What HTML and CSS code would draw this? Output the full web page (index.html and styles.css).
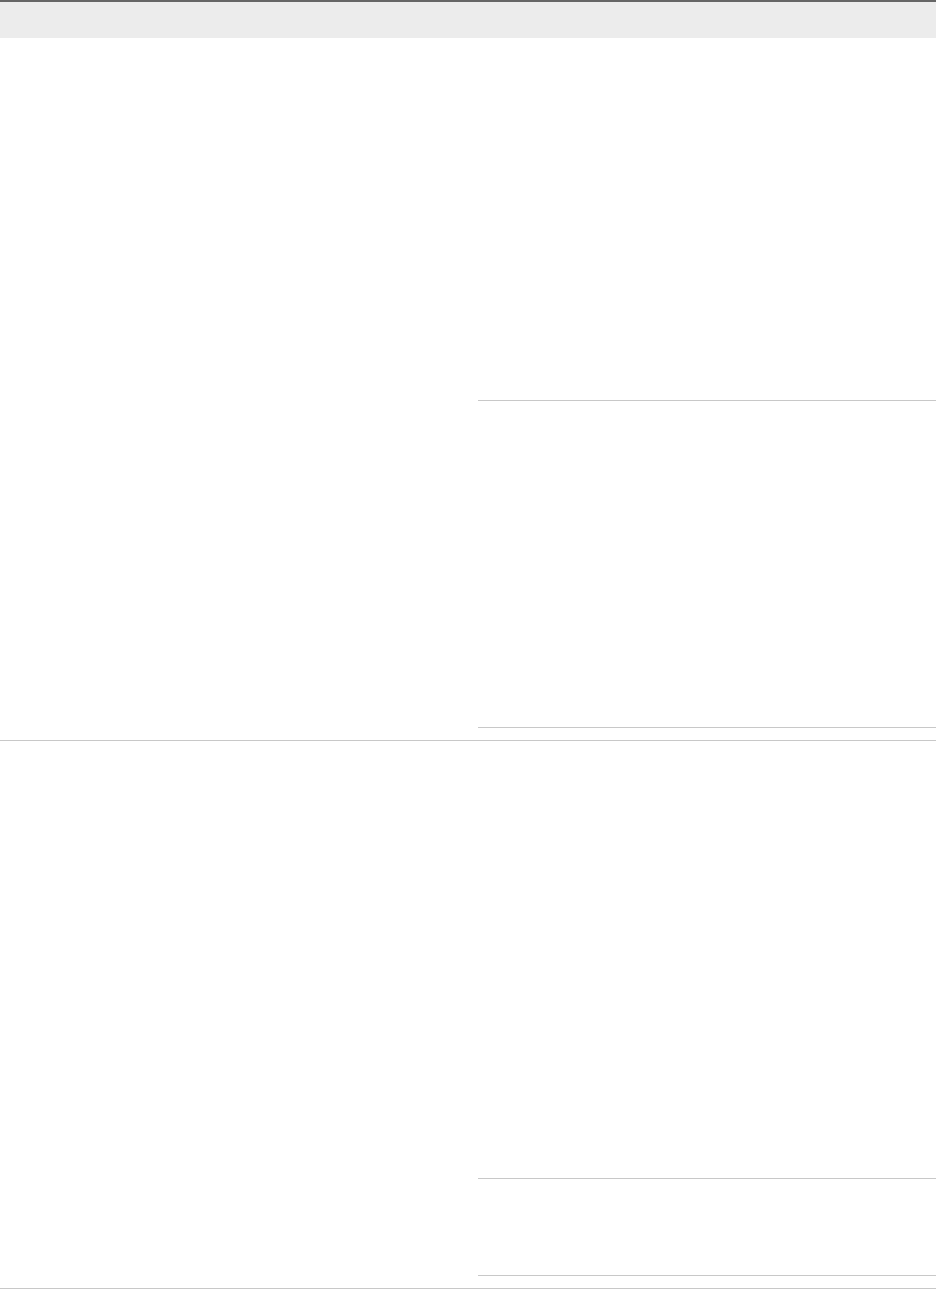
FILE: index.html
```html
<!doctype html>
<html>
<head>
<meta charset="utf-8"/>
<title>table</title>
<link rel="stylesheet" href="styles.css">
</head>
<body>
<div class="tbl">
	<div class="thead"></div>
	<div class="row">
		<div class="cell-l"></div>
		<div class="cell-r">
			<div class="blk b1"></div>
			<div class="blk b2"></div>
		</div>
	</div>
	<div class="row">
		<div class="cell-l"></div>
		<div class="cell-r">
			<div class="blk b3"></div>
			<div class="blk b4"></div>
		</div>
	</div>
</div>
</body>
</html>
```
FILE: styles.css
```css
*{ margin:0; padding:0; box-sizing:content-box;}
body{ background:#fff; font-family:"Liberation Sans", Arial, sans-serif;}
.tbl{ width:936px;}
.thead{ height:36px; background:#ececec; border-top:2px solid #666;}
.row{ display:grid; grid-template-columns:478px 1fr; border-bottom:1px solid #c8c8c8;}
.cell-r{ padding-bottom:12px;}
.blk{ border-bottom:1px solid #c8c8c8;}
.b1{ height:362px;}
.b2{ height:326px;}
.b3{ height:437px;}
.b4{ height:96px;}
```
